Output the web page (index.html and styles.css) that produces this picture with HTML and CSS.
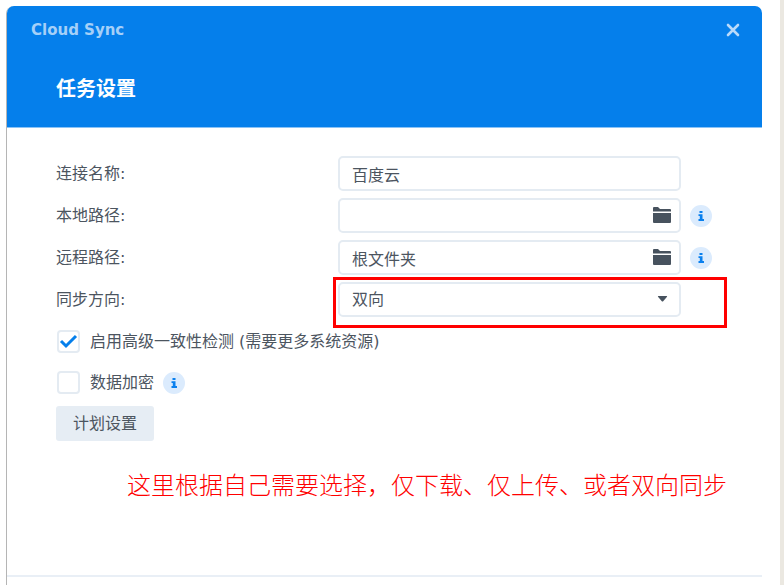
FILE: index.html
```html
<!DOCTYPE html>
<html lang="zh-CN">
<head>
<meta charset="utf-8">
<meta name="viewport" content="width=device-width, initial-scale=1">
<title>Cloud Sync</title>
<link rel="stylesheet" href="styles.css">
</head>
<body>
<svg class="defs" aria-hidden="true">
  <symbol id="folder" viewBox="0 0 18 16"><path d="M1 0h4l2 2h10q1 0 1 1v1.500H0V1q0-1 1-1zM0 6h18v9q0 1-1 1H1q-1 0-1-1z"/></symbol>
  <symbol id="info" viewBox="0 0 22 22"><circle cx="11" cy="11" r="11" fill="#dbebfd"/><path fill="#0a80ee" d="M9.500 6h3v2h-3zM8.500 9.300h4V14H14v2H8.500v-2h1.300v-2.900H8.500z"/></symbol>
</svg>
<main class="dialog">
  <header class="head">
    <div class="bar">
      <span class="app">Cloud Sync</span>
      <button class="close" type="button" aria-label="关闭"><svg viewBox="0 0 14 14"><path d="M2 2l10 10M12 2L2 12"/></svg></button>
    </div>
    <h1 class="title">任务设置</h1>
  </header>
  <form class="form">
    <div class="fields">
      <div class="row">
        <label for="name">连接名称:</label>
        <input class="box" id="name" type="text" value="百度云">
      </div>
      <div class="row">
        <label for="local">本地路径:</label>
        <div class="picker">
          <input class="box" id="local" type="text">
          <button class="browse" type="button" aria-label="浏览"><svg><use href="#folder"/></svg></button>
        </div>
        <button class="info" type="button" aria-label="说明"><svg><use href="#info"/></svg></button>
      </div>
      <div class="row">
        <label for="remote">远程路径:</label>
        <div class="picker">
          <input class="box" id="remote" type="text" value="根文件夹">
          <button class="browse" type="button" aria-label="浏览"><svg><use href="#folder"/></svg></button>
        </div>
        <button class="info" type="button" aria-label="说明"><svg><use href="#info"/></svg></button>
      </div>
      <div class="row">
        <label for="direction">同步方向:</label>
        <div class="picker">
          <select class="box" id="direction"><option>双向</option></select>
          <svg class="caret" viewBox="0 0 10 6"><path d="M1 0h8q1 0 .5.800L5.700 5.200q-.7.800-1.400 0L.5.800Q0 0 1 0z"/></svg>
          <span class="mark"></span>
        </div>
      </div>
    </div>
    <div class="options">
      <div class="option">
        <input class="tick" id="check" type="checkbox" checked>
        <label for="check">启用高级一致性检测 (需要更多系统资源)</label>
      </div>
      <div class="option">
        <input class="tick" id="encrypt" type="checkbox">
        <label for="encrypt">数据加密</label>
        <button class="info" type="button" aria-label="说明"><svg><use href="#info"/></svg></button>
      </div>
      <button class="plan" type="button">计划设置</button>
    </div>
  </form>
  <p class="note">这里根据自己需要选择，仅下载、仅上传、或者双向同步</p>
  <footer class="foot"></footer>
</main>
<div class="edge"></div>
</body>
</html>
```
FILE: styles.css
```css
* { box-sizing: border-box; }
body {
  margin: 0;
  min-height: 100vh;
  display: flex;
  background: #fff;
  color: #4c555f;
  font: 16px/24px "DejaVu Sans", "Noto Sans CJK SC", sans-serif;
}
button { border: 0; padding: 0; background: none; font: inherit; color: inherit; }
svg { display: block; }
.defs { position: absolute; width: 0; height: 0; }
.dialog {
  flex: 1;
  display: flex;
  flex-direction: column;
  margin: 6px 18px 0 6px;
  border-left: 1px solid #b5b5b5;
  border-radius: 8px 0 0 0;
}
.head {
  height: 122px;
  background: #057feb;
  border-radius: 7px 7px 0 0;
  border-bottom: 1px solid #8bc3f6;
}
.bar { display: flex; justify-content: space-between; align-items: center; height: 48px; padding: 0 22px 0 24px; }
.app { font: bold 15px/24px "DejaVu Sans", sans-serif; color: #a5d0f8; }
.close svg { width: 14px; height: 14px; fill: none; stroke: #b9dafa; stroke-width: 2.6; stroke-linecap: round; }
.title { margin: 20px 0 0 49px; font: bold 20px/28px "Noto Sans CJK SC", sans-serif; color: #fff; }
.form { padding: 28px 50px 0 49px; }
.fields { display: grid; gap: 7px; }
.row { display: grid; grid-template-columns: 282px 1fr 22px; align-items: center; height: 35px; }
.row .box, .row .picker { width: calc(100% - 9px); }
.row .picker { position: relative; }
.box {
  height: 35px;
  padding: 0 12px;
  border: 2px solid #e4ebf2;
  border-radius: 5px;
  background: #fff;
  color: inherit;
  font: inherit;
  appearance: none;
}
.row .picker .box { display: block; width: 100%; }
.browse { position: absolute; right: 10px; top: 9px; }
.browse svg { width: 18px; height: 16px; fill: #47525e; }
.caret { position: absolute; right: 13px; top: 14px; width: 11px; height: 6px; fill: #47525e; }
.mark { position: absolute; inset: -5px -46px -11px -5px; border: 3px solid #f00; pointer-events: none; }
.info svg { width: 22px; height: 22px; }
.options { display: grid; justify-items: start; gap: 6px; margin-top: 7px; }
.option { display: flex; align-items: center; height: 35px; padding-left: 1px; }
.option label { margin-left: 10px; }
.option .info { margin-left: 9px; }
.tick {
  width: 23px;
  height: 23px;
  margin: 0;
  border: 2px solid #e4ebf2;
  border-radius: 4px;
  background: #fff;
  appearance: none;
}
.tick:checked {
  background: #fff url("data:image/svg+xml,%3Csvg xmlns='http://www.w3.org/2000/svg' viewBox='0 0 19 19'%3E%3Cpath d='M2 9l5 5L17 4' fill='none' stroke='%23057feb' stroke-width='3'/%3E%3C/svg%3E") center / 19px no-repeat;
}
.plan { height: 35px; padding: 0 17px; border-radius: 3px; background: #e6edf4; }
.note { margin: 25px 0 26px 120px; font: 300 24px/36px "Noto Sans CJK SC", sans-serif; color: #f00; }
.foot { margin-top: auto; height: 10px; border-top: 2px solid #e9eff6; }
.edge { width: 4px; background: #ebe8e1; }
```
